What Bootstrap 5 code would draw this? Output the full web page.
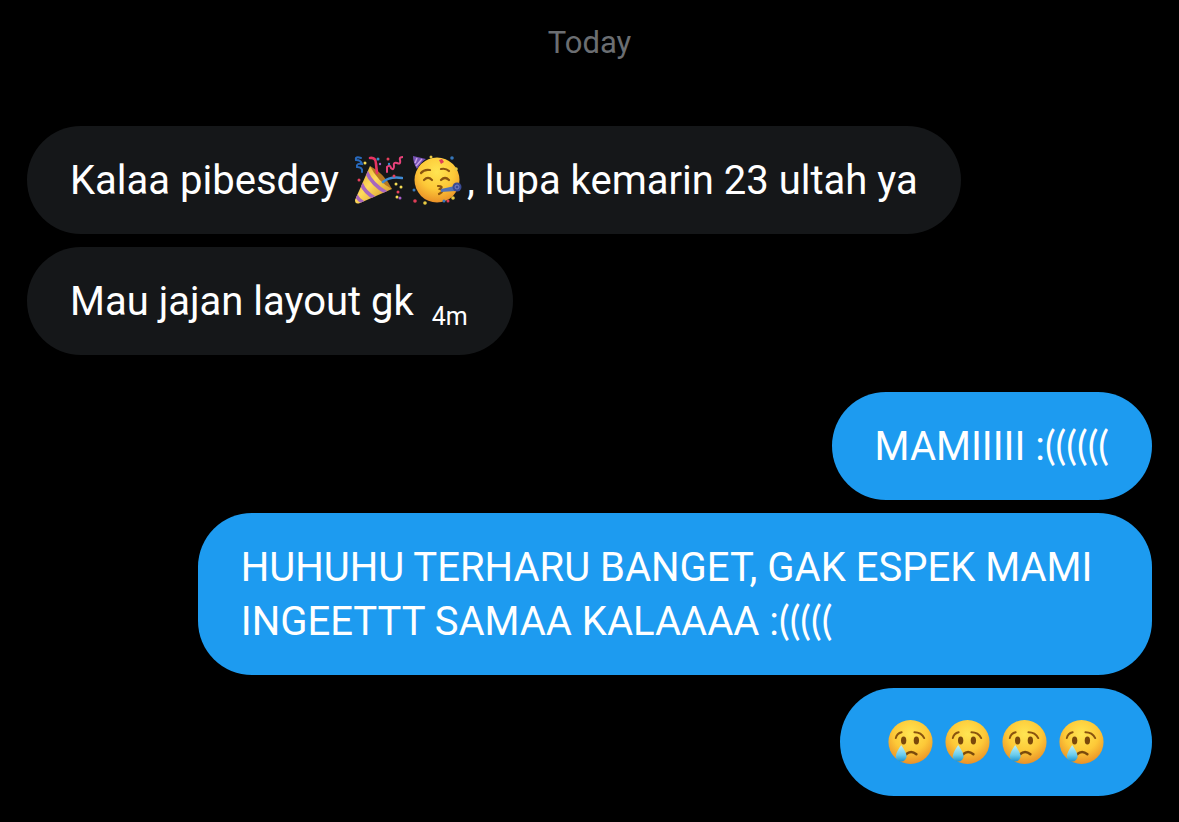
<!DOCTYPE html>
<html lang="id" data-bs-theme="dark">
<head>
<meta charset="utf-8">
<meta name="viewport" content="width=device-width, initial-scale=1">
<title>Messages</title>
<link href="https://cdn.jsdelivr.net/npm/bootstrap@5.3.0/dist/css/bootstrap.min.css" rel="stylesheet">
<style>
body{background:#000;color:#fff;font-family:Roboto,"Liberation Sans",sans-serif;font-size:40px;line-height:54px}
.chat{padding:20px 27px 26px}
.day{font-size:31px;line-height:46px;color:#6b6e72;margin-bottom:60px}
.thread{gap:13px}
.bubble{padding:28px 43px 26px;border-radius:54px;max-width:calc(85% - 2px)}
.received{background:#151719}
.sent{background:#1d9bf0}
.reply{margin-top:24px}
.time{display:inline-block;font-size:25px;line-height:24px;margin:0 2px 0 8px;position:relative;top:10px}
.parens{font-family:Lato,"Liberation Sans",sans-serif;line-height:1}
.emoji{width:50px;height:50px;margin:0 5px 0 4px;vertical-align:-11px}
.faces{padding:27px 42px}
.faces .emoji{width:49px;height:50px;margin:2px 4px;flex:none}
</style>
</head>
<body>
<svg width="0" height="0" class="position-absolute" aria-hidden="true">
  <defs>
    <radialGradient id="skin" cx=".5" cy=".32" r=".7"><stop offset="0" stop-color="#ffe552"/><stop offset=".55" stop-color="#fdc938"/><stop offset="1" stop-color="#e98d26"/></radialGradient>
    <linearGradient id="tear" x2="0" y2="1"><stop offset="0" stop-color="#c4f2fb"/><stop offset=".6" stop-color="#6accec"/><stop offset="1" stop-color="#1c93d2"/></linearGradient>
    <linearGradient id="cone" x2="1" y2="1"><stop offset="0" stop-color="#d79a22"/><stop offset=".45" stop-color="#ffdb5c"/><stop offset="1" stop-color="#c9861c"/></linearGradient>
    <clipPath id="coneclip"><path d="M17 11 39 34 7 48Q2 50 2 45Z"/></clipPath>
    <symbol id="cry" viewBox="0 0 50 50">
      <circle cx="25" cy="25" r="22.500" fill="url(#skin)"/>
      <g fill="none" stroke="#8a540f" stroke-width="2" stroke-linecap="round"><path d="M10 21q1-5 6-6M29 15q7 0 10 6"/><path d="M20.500 37.500q5-4.500 10.500 0" stroke-width="2.600" stroke="#7a4a0c"/></g>
      <g fill="#7a480b"><ellipse cx="18" cy="23.500" rx="2.700" ry="4"/><ellipse cx="31" cy="23.500" rx="2.700" ry="4"/></g>
      <path d="M15.500 28q5.500 8 5.500 11.500a5.500 5.500 0 0 1-11 0q0-3.500 5.500-11.500z" fill="url(#tear)"/>
    </symbol>
    <symbol id="popper" viewBox="0 0 50 50">
      <path d="M17 11 39 34 7 48Q2 50 2 45Z" fill="url(#cone)"/>
      <g clip-path="url(#coneclip)" fill="none" stroke="#a767bd" stroke-width="3.600"><path d="M13 16q6 14 21 22M8 28q4 10 14 15M3 40q2 5 8 8"/></g>
      <path d="M17 11q14 7 22 23-14-7-22-23z" fill="#b57722"/>
      <g fill="none" stroke-width="2.600" stroke-linecap="round">
        <path d="M17 3q6-1 6 6l1 9" stroke="#e83362"/>
        <path d="M34 17v-5q3-3 4 1 3 3 3-2-1-4 3-3 4 2 3-3-1-3 3-3" stroke="#e7427a" stroke-width="2"/>
        <path d="M30 27q7-6 19-4" stroke="#3f8bd5"/>
        <path d="M8 3Q2 1 3 5q5 0 6 4-6-1-5 3 6 0 5 5" stroke="#2869bc" stroke-width="2"/>
      </g>
      <g fill="#e6405c"><circle cx="6" cy="25" r="1.500"/><circle cx="35" cy="4" r="1.500"/><circle cx="45" cy="37" r="1.500"/><circle cx="41" cy="21" r="1.500"/></g>
      <g fill="#f5dd55"><circle cx="12" cy="8" r="1.500"/><circle cx="43" cy="29" r="1.500"/><circle cx="48" cy="32" r="1.500"/><circle cx="44" cy="42" r="1.500"/></g>
      <g fill="#388fca"><circle cx="25" cy="4" r="1.500"/><circle cx="36" cy="9" r="1.200"/></g><g fill="#a85dca"><circle cx="47" cy="43" r="1.500"/><circle cx="27" cy="9" r="1.200"/></g>
    </symbol>
    <symbol id="party" viewBox="0 0 50 50">
      <circle cx="25" cy="25" r="22.500" fill="url(#skin)"/>
      <path d="M1 1 14 4Q9 7 5 14Q1 8 1 1Z" fill="#7652b5"/><path d="M5 3 3 8M10 4 4 11" stroke="#c8a2e4" stroke-width="1.500"/>
      <g fill="none" stroke="#8a540f" stroke-width="2.200" stroke-linecap="round"><path d="M9 18q3-4 9-3M29 14q5-1 8 2M12 25q4-4 8 0M29 25q4-4 8 0M26 31q6 0 2 3 5 2-1 5"/></g>
      <path d="M29 34 43 31v5l-14 1z" fill="#5271b4"/><circle cx="45" cy="32" r="4.500" fill="#3a4b94"/><circle cx="45" cy="32" r="2" fill="none" stroke="#7882c5"/>
      <g fill="#df3e57"><path d="m27 5 3-1 2 3-3 2z"/><circle cx="3" cy="46" r="1.800"/><circle cx="36" cy="46" r="1.500"/></g>
      <g fill="#e7ca43"><circle cx="19" cy="2" r="1.500"/><circle cx="44" cy="14" r="1.800"/><circle cx="13" cy="48" r="1.800"/><circle cx="41" cy="43" r="1.800"/></g>
      <g fill="#3677bb"><circle cx="40" cy="3" r="1.800"/><circle cx="2" cy="35" r="1.500"/><circle cx="32" cy="46" r="1.500"/></g>
    </symbol>
  </defs>
</svg>
<main class="chat">
  <div class="day text-center">Today</div>
  <div class="thread d-flex flex-column">
    <div class="bubble received align-self-start">Kalaa pibesdey <svg class="emoji" role="img" aria-label="Party popper"><use href="#popper"/></svg><svg class="emoji" role="img" aria-label="Partying face"><use href="#party"/></svg>, lupa kemarin 23 ultah ya</div>
    <div class="bubble received align-self-start">Mau jajan layout gk <time class="time">4m</time></div>
    <div class="bubble sent reply align-self-end">MAMIIIII :<span class="parens">((((((</span></div>
    <div class="bubble sent align-self-end">HUHUHU TERHARU BANGET, GAK ESPEK MAMI <span>INGEETTT SAMAA KALAAAA :</span><span class="parens">(((((</span></div>
    <div class="bubble sent faces align-self-end d-flex">
      <svg class="emoji" role="img" aria-label="Crying face"><use href="#cry"/></svg>
      <svg class="emoji" role="img" aria-label="Crying face"><use href="#cry"/></svg>
      <svg class="emoji" role="img" aria-label="Crying face"><use href="#cry"/></svg>
      <svg class="emoji" role="img" aria-label="Crying face"><use href="#cry"/></svg>
    </div>
  </div>
</main>
<script src="https://cdn.jsdelivr.net/npm/bootstrap@5.3.0/dist/js/bootstrap.bundle.min.js"></script>
</body>
</html>
